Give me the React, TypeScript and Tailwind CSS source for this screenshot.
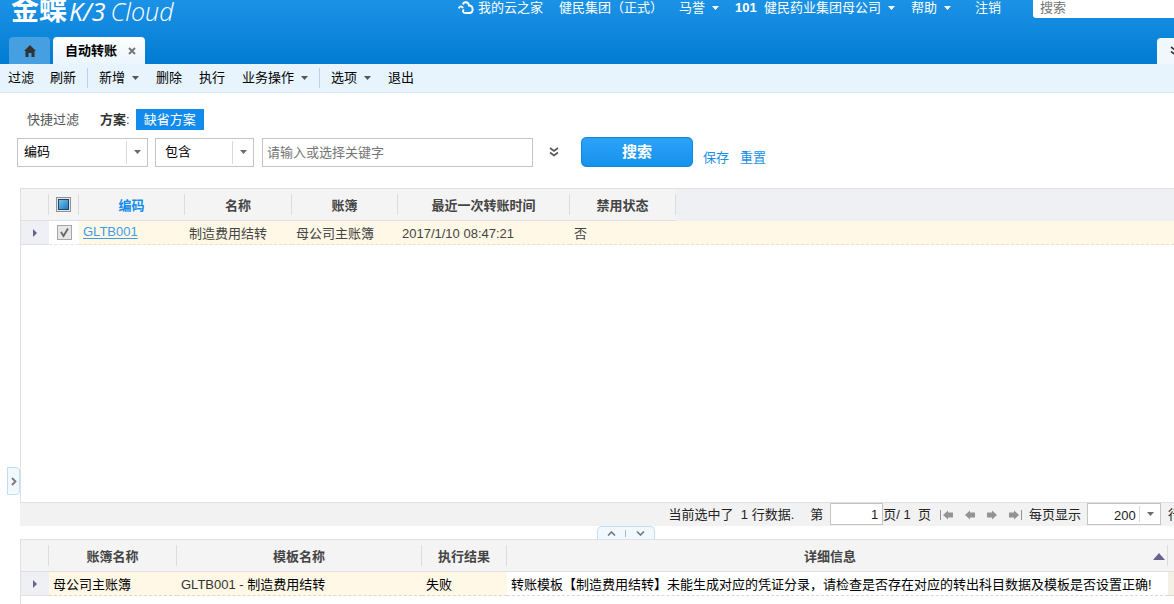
import type { ReactNode } from "react";

function Caret({ className = "" }: { className?: string }) {
  return (
    <svg className={className} width="7" height="4" viewBox="0 0 7 4" aria-hidden="true">
      <path d="M0 0h7L3.5 4z" fill="currentColor" />
    </svg>
  );
}

function DoubleChevron() {
  return (
    <svg className="shrink-0" width="10" height="10" viewBox="0 0 10 10" fill="none" stroke="currentColor" strokeWidth="1.6" aria-hidden="true">
      <path d="M1 1l4 3 4-3M1 5.5l4 3 4-3" />
    </svg>
  );
}

function PageArrow({ back = false, edge = false }: { back?: boolean; edge?: boolean }) {
  return (
    <svg
      className={back ? "rotate-180" : ""}
      width={edge ? 13 : 10}
      height="10"
      viewBox={edge ? "0 0 13 10" : "0 0 10 10"}
      aria-hidden="true"
    >
      <path d="M0 2.500h5V0.500L10 5 5 9.500V7.500H0z" fill="#939393" />
      {edge && <path d="M12 0h1v10h-1z" fill="#939393" />}
    </svg>
  );
}

function RowMarker() {
  return (
    <svg className="mx-auto" width="4" height="8" viewBox="0 0 4 8" aria-hidden="true">
      <path d="M0 0l4 4-4 4z" fill="#66648c" />
    </svg>
  );
}

function Divider() {
  return <span className="h-[20px] w-px bg-[#b9d2ec]" />;
}

function Tool({ label, menu = false }: { label: string; menu?: boolean }) {
  return (
    <button type="button" className="flex items-center gap-[7px] whitespace-nowrap">
      {label}
      {menu && <Caret className="text-[#555]" />}
    </button>
  );
}

function HeadCell({ children, className = "" }: { children?: ReactNode; className?: string }) {
  return (
    <th scope="col" className={`h-[33px] border-y border-[#e0e0e0] bg-[#f4f4f4] p-0 ${className}`}>
      <div className="flex h-[21px] items-center justify-center border-r border-[#dcdcdc] pt-[2px]">{children}</div>
    </th>
  );
}

function Select({ label, options, className, inset }: { label: string; options: string[]; className: string; inset: string }) {
  return (
    <div className={`relative shrink-0 border border-[#c4c4c4] bg-white ${className}`}>
      <select aria-label={label} className={`h-full w-full appearance-none bg-transparent outline-none ${inset}`}>
        {options.map((o) => (
          <option key={o}>{o}</option>
        ))}
      </select>
      <span className="pointer-events-none absolute inset-y-[2px] right-0 flex w-[21px] items-center justify-center border-l border-[#d9d9d9] text-[#6b6b6b]">
        <Caret />
      </span>
    </div>
  );
}

function Header() {
  return (
    <header className="flex h-[64px] shrink-0 flex-col justify-between bg-gradient-to-b from-[#1b92e6] to-[#007cd2] text-white">
      <div className="flex items-start">
        <h1 className="ml-[11px] flex h-[22px] items-center whitespace-nowrap leading-[22px]">
          <span className="text-[28px] font-bold">金蝶</span>
          <span className="ml-[2px] font-['Open_Sans'] text-[25px] font-medium italic">K/3</span>
          <span className="ml-[5px] font-['Open_Sans'] text-[25px] font-light italic">Cloud</span>
        </h1>
        <nav className="ml-auto flex h-[15px] items-center gap-[16px] whitespace-nowrap leading-[15px]">
          <a href="#yun" className="flex items-center gap-[4px]">
            <svg width="16" height="14" viewBox="0 0 16 14" fill="none" stroke="#fff" strokeWidth="2" aria-hidden="true">
              <path d="M0.800 7.500C1.500 5 3.800 4.800 5 7M5 3.500C5.500 0.500 10.500 0.300 11 4.500C15.500 4.500 16 12 11.500 12H7C4.800 12 4.500 9.500 6 8.500" />
            </svg>
            我的云之家
          </a>
          <a href="#org">健民集团（正式）</a>
          <button type="button" className="flex items-center gap-[7px]">马誉<Caret /></button>
          <button type="button" className="flex items-center gap-[7px]">
            <span><b>101</b>&nbsp; 健民药业集团母公司</span>
            <Caret />
          </button>
          <button type="button" className="flex items-center gap-[7px]">帮助<Caret /></button>
          <a href="#logout" className="ml-[8px]">注销</a>
        </nav>
        <input
          aria-label="搜索"
          placeholder="搜索"
          className="ml-[32px] h-[18px] w-[141px] rounded-bl-[3px] bg-white px-[7px] pb-[2px] text-black outline-none placeholder:text-[#757575]"
        />
      </div>
      <div className="flex items-end">
        <button type="button" aria-label="首页" className="ml-[9px] flex h-[27px] w-[41px] items-center justify-center rounded-t-[4px] bg-[#459fe0]">
          <svg width="12" height="12" viewBox="0 0 12 12" aria-hidden="true">
            <path d="M6 0l6 6h-1.500v6H7.500V8h-3v4h-3V6H0z" fill="#333" />
          </svg>
        </button>
        <div className="ml-[3px] flex h-[27px] w-[92px] items-center justify-between rounded-t-[4px] bg-gradient-to-b from-white to-[#eaf5fd] pl-[12px] pr-[9px]">
          <b className="text-black">自动转账</b>
          <button type="button" aria-label="关闭">
            <svg width="8" height="8" viewBox="0 0 8 8" stroke="#777" strokeWidth="2" aria-hidden="true">
              <path d="M1 1l6 6M7 1l-6 6" />
            </svg>
          </button>
        </div>
        <button type="button" aria-label="更多" className="ml-auto flex h-[26px] w-[17px] items-center overflow-hidden rounded-tl-[4px] bg-[#f1f8fd] pl-[13px] text-[#333]">
          <DoubleChevron />
        </button>
      </div>
    </header>
  );
}

function Toolbar() {
  return (
    <div className="flex h-[29px] shrink-0 items-center border-b border-[#d5e8fb] bg-[#e7f4fd] pl-[8px] text-black">
      <div className="flex items-center gap-[16px]">
        <Tool label="过滤" />
        <Tool label="刷新" />
      </div>
      <div className="ml-[11px] flex items-center gap-[11px]">
        <Divider />
        <div className="flex items-center gap-[17px]">
          <Tool label="新增" menu />
          <Tool label="删除" />
          <Tool label="执行" />
          <Tool label="业务操作" menu />
        </div>
        <Divider />
        <div className="flex items-center gap-[17px]">
          <Tool label="选项" menu />
          <Tool label="退出" />
        </div>
      </div>
    </div>
  );
}

function Filters() {
  return (
    <section className="shrink-0 pl-[17px] pt-[16px]">
      <div className="flex h-[21px] items-center pl-[10px]">
        <span className="text-[#555]">快捷过滤</span>
        <span className="ml-[21px]"><b>方案</b>:</span>
        <button type="button" className="ml-[6px] h-[21px] bg-[#128bec] px-[8px] text-white">缺省方案</button>
      </div>
      <div className="mt-[7px] flex items-center text-black">
        <Select label="字段" options={["编码", "名称"]} className="h-[29px] w-[131px]" inset="pl-[6px]" />
        <Select label="条件" options={["包含", "等于"]} className="ml-[7px] h-[29px] w-[99px]" inset="pl-[9px]" />
        <input
          aria-label="关键字"
          placeholder="请输入或选择关键字"
          className="ml-[8px] h-[29px] w-[271px] border border-[#c4c4c4] px-[4px] outline-none placeholder:text-[#757575]"
        />
        <button type="button" aria-label="展开条件" className="ml-[16px] text-[#555]"><DoubleChevron /></button>
        <button type="button" className="ml-[22px] h-[30px] w-[112px] rounded-[5px] border border-[#0f86dd] bg-gradient-to-b from-[#2ba2f7] to-[#1492ec] text-[15px] font-bold text-white">
          搜索
        </button>
        <div className="ml-[10px] flex gap-[11px] pt-[11px] text-[#1a8fe8]">
          <a href="#save">保存</a>
          <a href="#reset">重置</a>
        </div>
      </div>
    </section>
  );
}

function MainGrid() {
  const cell = "h-[24px] border-b border-dashed border-[#e6e0d4] bg-[#fff8e6] px-[4px] pb-0 pt-[2px]";
  return (
    <div className="min-h-[200px] flex-1 overflow-hidden border-l border-[#e0e0e0]">
      <table className="w-full table-fixed border-separate border-spacing-0 whitespace-nowrap text-[#444]">
        <colgroup>
          <col className="w-[28px]" />
          <col className="w-[30px]" />
          <col className="w-[106px]" />
          <col className="w-[107px]" />
          <col className="w-[106px]" />
          <col className="w-[172px]" />
          <col className="w-[106px]" />
          <col />
        </colgroup>
        <thead>
          <tr>
            <HeadCell />
            <HeadCell>
              <button type="button" aria-label="全选" className="-mt-[2px] flex size-[15px] items-center justify-center border border-[#8e9297] bg-[#e4e4e4]">
                <span className="size-[11px] border border-[#1d4766] bg-gradient-to-br from-[#77c4ee] to-[#1b78ba]" />
              </button>
            </HeadCell>
            <HeadCell className="text-[#128bec]">编码</HeadCell>
            <HeadCell>名称</HeadCell>
            <HeadCell>账簿</HeadCell>
            <HeadCell>最近一次转账时间</HeadCell>
            <HeadCell>禁用状态</HeadCell>
            <td className="border-t border-[#e0e0e0] bg-[#eef0f4]" />
          </tr>
        </thead>
        <tbody>
          <tr>
            <td className="border-b border-[#e0e0e0] bg-[#eef0f6] p-0"><RowMarker /></td>
            <td className="border-b border-dashed border-[#e6e6e6] p-0">
              <label className="relative mx-auto flex size-[15px] items-center justify-center">
                <input type="checkbox" aria-label="选择 GLTB001" defaultChecked className="peer size-[15px] appearance-none border border-[#a6a6a6] bg-[#e6e6e6]" />
                <svg className="pointer-events-none invisible absolute peer-checked:visible" width="11" height="11" viewBox="0 0 11 11" fill="none" stroke="#666" strokeWidth="1.8" aria-hidden="true">
                  <path d="M2 5l2.500 4L9 1.500" />
                </svg>
              </label>
            </td>
            <td className="h-[24px] border-b border-dashed border-[#e6e0d4] bg-[#fff8e6] px-[4px] pb-[2px] pt-0">
              <a href="#GLTB001" className="text-[#3f9be6] underline underline-offset-2">GLTB001</a>
            </td>
            <td className={cell}>制造费用结转</td>
            <td className={cell}>母公司主账簿</td>
            <td className={cell}>2017/1/10 08:47:21</td>
            <td className={cell}>否</td>
            <td className={cell} />
          </tr>
        </tbody>
      </table>
    </div>
  );
}

function Pager() {
  return (
    <div className="flex h-[24px] shrink-0 items-start justify-end whitespace-nowrap border-t border-[#e0e0e0] bg-[#f2f2f2] leading-[23px] text-[#222]">
      <span>当前选中了&nbsp; 1 行数据.</span>
      <label htmlFor="page" className="ml-[16px]">第</label>
      <input id="page" defaultValue="1" className="ml-[7px] h-[22px] w-[53px] border border-[#c4c4c4] bg-white px-[4px] text-right outline-none" />
      <span>页/ 1&nbsp; 页</span>
      <div className="ml-[9px] flex h-[23px] items-center gap-[12px]">
        <button type="button" aria-label="首页"><PageArrow back edge /></button>
        <button type="button" aria-label="上一页"><PageArrow back /></button>
        <button type="button" aria-label="下一页"><PageArrow /></button>
        <button type="button" aria-label="末页"><PageArrow edge /></button>
      </div>
      <span className="ml-[7px] mr-[6px]">每页显示</span>
      <Select label="每页行数" options={["200", "100"]} className="h-[22px] w-[74px]" inset="pl-[26px]" />
      <span className="ml-[7px] w-[6px] overflow-hidden">行</span>
    </div>
  );
}

function Splitter() {
  return (
    <div className="flex h-[13px] shrink-0 justify-center pl-[58px]">
      <div className="flex w-[58px] items-center justify-around rounded-t-[5px] border border-b-0 border-[#bcdff6] bg-[#f1f9fe] px-[4px] text-[#777]">
        <button type="button" aria-label="收起">
          <svg width="9" height="5" viewBox="0 0 9 5" fill="none" stroke="currentColor" strokeWidth="1.600"><path d="M1 4.500L4.500 1 8 4.500" /></svg>
        </button>
        <span className="h-[7px] w-px bg-[#b5b5b5]" />
        <button type="button" aria-label="展开">
          <svg width="9" height="5" viewBox="0 0 9 5" fill="none" stroke="currentColor" strokeWidth="1.600"><path d="M1 0.500L4.500 4 8 0.500" /></svg>
        </button>
      </div>
    </div>
  );
}

function ResultGrid() {
  const cell = "h-[24px] border-b border-dashed border-[#dcd8d0] px-[4px] pb-0 pt-[2px]";
  return (
    <div className="h-[65px] shrink-0 border-l border-[#e0e0e0]">
      <table className="w-full table-fixed border-separate border-spacing-0 whitespace-nowrap text-[#444]">
        <colgroup>
          <col className="w-[28px]" />
          <col className="w-[128px]" />
          <col className="w-[245px]" />
          <col className="w-[85px]" />
          <col />
          <col className="w-[6px]" />
        </colgroup>
        <thead>
          <tr>
            <HeadCell />
            <HeadCell>账簿名称</HeadCell>
            <HeadCell>模板名称</HeadCell>
            <HeadCell>执行结果</HeadCell>
            <HeadCell>
              <span className="ml-auto">详细信息</span>
              <svg className="ml-auto mr-[2px]" width="12" height="7" viewBox="0 0 12 7" aria-hidden="true">
                <path d="M6 0l6 7H0z" fill="#66648c" />
              </svg>
            </HeadCell>
            <td className="border-y border-[#e0e0e0] bg-[#f4f4f4] p-0" />
          </tr>
        </thead>
        <tbody className="text-black">
          <tr>
            <td className="border-b border-[#e0e0e0] bg-[#eef0f6] p-0"><RowMarker /></td>
            <td className={`${cell} bg-[#fff8e6]`}>母公司主账簿</td>
            <td className={`${cell} bg-[#fff8e6]`}><span className="text-[#333]">GLTB001 - </span>制造费用结转</td>
            <td className={`${cell} bg-[#fff8e6]`}>失败</td>
            <td className={`${cell} bg-white`}>转账模板【制造费用结转】未能生成对应的凭证分录，请检查是否存在对应的转出科目数据及模板是否设置正确!</td>
            <td className="border-b border-dashed border-[#dcd8d0] bg-[#f5f0e6] p-0" />
          </tr>
        </tbody>
      </table>
    </div>
  );
}

export default function App() {
  return (
    <div className="flex min-h-screen flex-col overflow-hidden bg-white font-['Liberation_Sans','Noto_Sans_CJK_SC',sans-serif] text-[13px] leading-[18px] text-[#333]">
      <Header />
      <Toolbar />
      <Filters />
      <main className="mt-[21px] flex flex-1">
        <aside className="flex w-[20px] shrink-0 items-end pb-[109px] pl-[7px]">
          <button type="button" aria-label="展开侧栏" className="flex h-[28px] w-[13px] items-center justify-center rounded-r-[4px] border border-[#bcdff6] bg-[#f1f9fe]">
            <svg width="6" height="9" viewBox="0 0 6 9" fill="none" stroke="#777" strokeWidth="1.800"><path d="M1 1l3.500 3.500L1 8" /></svg>
          </button>
        </aside>
        <div className="flex min-w-0 flex-1 flex-col">
          <MainGrid />
          <Pager />
          <Splitter />
          <ResultGrid />
        </div>
      </main>
    </div>
  );
}
